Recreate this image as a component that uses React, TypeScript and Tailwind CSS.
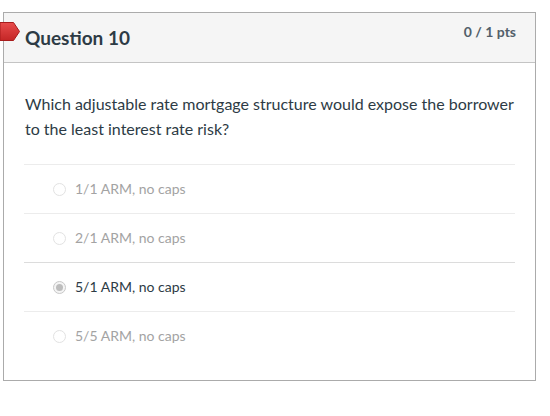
import React from "react";

const answers = [
  { id: "a1", label: "1/1 ARM, no caps", selected: false },
  { id: "a2", label: "2/1 ARM, no caps", selected: false },
  { id: "a3", label: "5/1 ARM, no caps", selected: true },
  { id: "a4", label: "5/5 ARM, no caps", selected: false },
];

const Radio = ({ checked }: { checked: boolean }) => (
  <span
    className={
      "flex h-[13px] w-[13px] shrink-0 items-center justify-center rounded-full border " +
      (checked ? "border-[#c8c8c8] bg-[#f4f4f4]" : "border-[#e2e2e2] bg-white")
    }
  >
    {checked && <span className="h-[7px] w-[7px] rounded-full bg-[#bdbdbd]" />}
  </span>
);

export default function App() {
  return (
    <div className="relative h-[416px] w-[550px] bg-white font-['Lato','Open_Sans',sans-serif] text-[#2d3b45]">
      <div className="ml-[3px] pt-[12px]">
        <div className="w-[533px] border border-[#ababab]">
          <div className="flex h-[50px] items-start justify-between border-b border-[#c4c4c4] bg-[#f5f5f5] pl-[21px] pr-[19px]">
            <h2 className="mt-[12px] text-[19px] font-bold leading-[26px] text-[#2d3b45]">Question 10</h2>
            <span className="mt-[9px] text-[14px] font-bold leading-[20px] text-[#525f6a]">0 / 1 pts</span>
          </div>

          <div className="px-5 pt-[28px] pb-[20px]">
            <p className="pl-[1px] text-[16px] leading-[25px] text-[#2d3b45]">
              Which adjustable rate mortgage structure would expose the borrower to the least interest rate risk?
            </p>

            <div className="mt-[23px]">
              {answers.map((a) => (
                <div
                  key={a.id}
                  className={
                    "flex h-[49px] items-center gap-[9px] border-t pl-[29px] " +
                    (a.selected ? "border-[#dcdcdc]" : "border-[#ececec]")
                  }
                >
                  <Radio checked={a.selected} />
                  <span
                    className={
                      "text-[14px] leading-[20px] " + (a.selected ? "text-[#2d3b45]" : "text-[#a3a3a3]")
                    }
                  >
                    {a.label}
                  </span>
                </div>
              ))}
            </div>
          </div>
        </div>
      </div>

      <svg className="absolute left-0 top-[22px]" width="20" height="19" viewBox="0 0 20 19">
        <defs>
          <linearGradient id="flag" x1="0" y1="0" x2="0" y2="1">
            <stop offset="0" stopColor="#e84c4c" />
            <stop offset="1" stopColor="#c42626" />
          </linearGradient>
        </defs>
        <path d="M0 0.5 H13.5 L19.5 9.5 L13.5 18.5 H0 Z" fill="url(#flag)" stroke="#a81c1c" strokeWidth="1" />
      </svg>
    </div>
  );
}
